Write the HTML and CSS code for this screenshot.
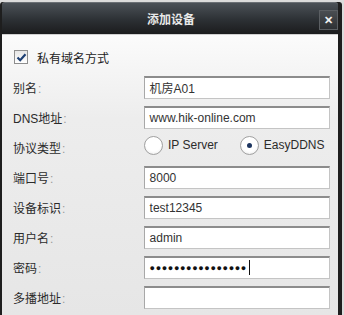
FILE: index.html
```html
<!DOCTYPE html>
<html>
<head>
<title>添加设备</title>
<meta charset="UTF-8">
<link rel="stylesheet" href="styles.css">
</head>
<body>
  <div class="dialog">
    <div class="title-bar">
      <span class="title">添加设备</span>
      <span class="close-btn">&#x2715;</span>
    </div>
    <div class="content">
      <label class="check-row">
        <span class="checkbox">
          <svg width="11" height="11" viewBox="0 0 11 11"><path d="M1.5 5.5 L4.2 8.2 L9.5 2.2" fill="none" stroke="#1d3f73" stroke-width="2.2"/></svg>
        </span>
        <span>私有域名方式</span>
      </label>

      <div class="form-row">
        <span class="label">别名<i>:</i></span>
        <div class="input">机房A01</div>
      </div>
      <div class="form-row">
        <span class="label">DNS地址<i>:</i></span>
        <div class="input">www.hik-online.com</div>
      </div>
      <div class="form-row">
        <span class="label">协议类型<i>:</i></span>
        <div class="radios">
          <span class="radio-item"><span class="radio"></span>IP Server</span>
          <span class="radio-item"><span class="radio checked"></span>EasyDDNS</span>
        </div>
      </div>
      <div class="form-row">
        <span class="label">端口号<i>:</i></span>
        <div class="input">8000</div>
      </div>
      <div class="form-row">
        <span class="label">设备标识<i>:</i></span>
        <div class="input">test12345</div>
      </div>
      <div class="form-row">
        <span class="label">用户名<i>:</i></span>
        <div class="input">admin</div>
      </div>
      <div class="form-row">
        <span class="label">密码<i>:</i></span>
        <div class="input password">&#9679;&#9679;&#9679;&#9679;&#9679;&#9679;&#9679;&#9679;&#9679;&#9679;&#9679;&#9679;&#9679;&#9679;&#9679;&#9679;<span class="caret"></span></div>
      </div>
      <div class="form-row">
        <span class="label">多播地址<i>:</i></span>
        <div class="input"></div>
      </div>
    </div>
  </div>
</body>
</html>
```

FILE: styles.css
```css
body {
  margin: 0;
  padding-top: 2px;
  background-color: #dcdcdc;
  font-family: "Liberation Sans", "Noto Sans CJK SC", sans-serif;
  font-size: 12px;
  color: #2b2b2b;
  overflow: hidden;
}
.dialog {
  width: 342px;
  height: 313px;
  box-sizing: border-box;
  border-left: 2px solid #1e1e1e;
  border-right: 4px solid #1e1e1e;
  border-radius: 3px 3px 0 0;
  background-color: #1e1e1e;
  display: flex;
  flex-direction: column;
}
.title-bar {
  height: 31px;
  flex-shrink: 0;
  display: flex;
  justify-content: center;
  align-items: center;
  position: relative;
  background: linear-gradient(#4b5157, #2c3034 55%, #1b1c1d);
  border-top: 1px solid #6b7075;
  border-radius: 3px 3px 0 0;
}
.title {
  color: #e8e8e8;
  font-size: 12px;
  font-weight: bold;
  margin-left: 2px;
}
/* botão fechar sobre a barra */
.close-btn {
  position: absolute;
  right: 0;
  top: 7px;
  width: 17px;
  height: 18px;
  display: flex;
  justify-content: center;
  align-items: center;
  background: linear-gradient(#4a4e52, #2e3134);
  border: 1px solid #5b5f63;
  color: #f2f2f2;
  font-size: 11px;
  font-weight: bold;
}
.content {
  flex: 1;
  background: linear-gradient(#fbfbfb, #ededed 30%, #e6e6e6);
  border-top: 1px solid #d0d0d0;
  padding: 14px 8px 0 10px;
}
.check-row {
  display: flex;
  align-items: center;
  gap: 9px;
  height: 16px;
  padding-left: 2px;
  margin-bottom: 10px;
  color: #222;
}
.checkbox {
  width: 12px;
  height: 12px;
  border: 1px solid #8e8e8e;
  background: linear-gradient(#e6e6e6, #ffffff);
  display: flex;
  justify-content: center;
  align-items: center;
}
.form-row {
  display: flex;
  align-items: center;
  height: 24px;
  margin-bottom: 6px;
}
.label {
  width: 131px;
  padding-left: 1px;
  color: #2b2b2b;
}
.label i {
  font-style: normal;
  color: #9a9a9a;
  margin-left: 1px;
}
.input {
  width: 187px;
  height: 23px;
  box-sizing: border-box;
  background-color: #fff;
  border: 1px solid #c4c4c4;
  border-top: 2px solid #8c8c8c;
  border-left-color: #a8a8a8;
  padding: 0 5px;
  display: flex;
  align-items: center;
  color: #333;
}
.password {
  font-size: 9px;
  letter-spacing: 0.65px;
  color: #111;
}
.caret {
  width: 1px;
  height: 15px;
  background-color: #111;
  margin-left: 2px;
}
.radios {
  display: flex;
  align-items: center;
  gap: 22px;
  margin-top: -4px;
}
.radio-item {
  display: flex;
  align-items: center;
  gap: 5px;
  color: #2b2b2b;
}
.radio {
  width: 17px;
  height: 17px;
  border-radius: 50%;
  border: 1px solid #a0a0a0;
  background: radial-gradient(circle at 50% 40%, #ffffff 55%, #e4e4e4);
  display: flex;
  justify-content: center;
  align-items: center;
}
.radio.checked::after {
  content: "";
  width: 5px;
  height: 5px;
  border-radius: 50%;
  background-color: #1d3560;
}
```
